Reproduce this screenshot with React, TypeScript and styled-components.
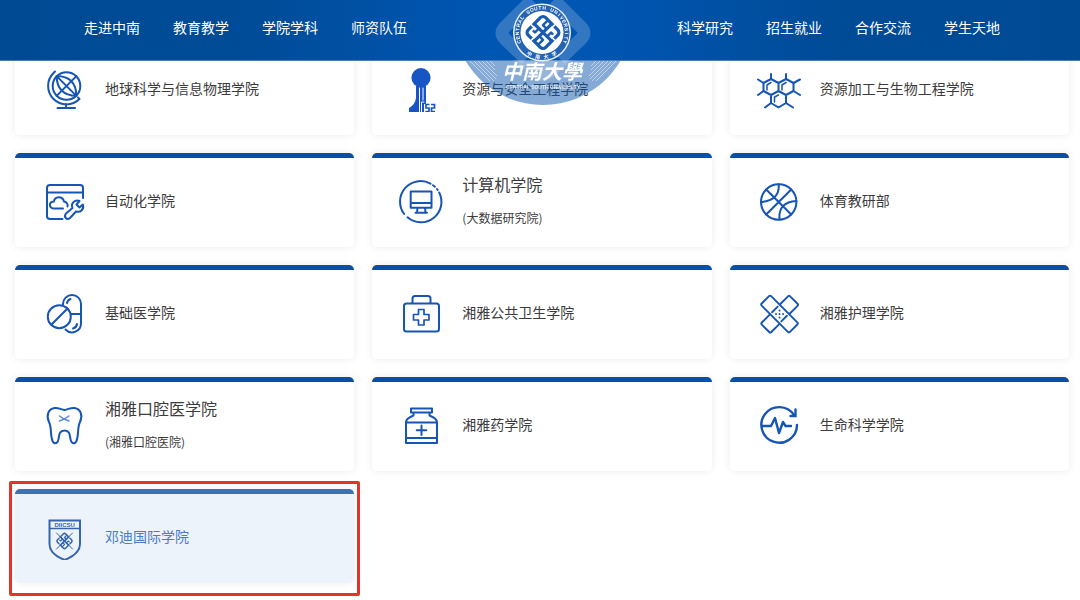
import React from "react";
import styled, { createGlobalStyle, css } from "styled-components";

const GlobalStyle = createGlobalStyle`
  *, *::before, *::after { box-sizing: border-box; }
  body {
    margin: 0;
    background: #fff;
    color: #3c3c3c;
    font-family: "Noto Sans CJK SC", sans-serif;
    overflow-x: hidden;
  }
  a { color: inherit; text-decoration: none; }
`;

const Header = styled.header`
  position: fixed;
  inset: 0 0 auto;
  z-index: 2;
  display: grid;
  grid-template-columns: 1fr 270px 1fr;
  align-items: center;
  height: 61px;
  padding-left: 4px;
  background: linear-gradient(90deg, #004a94, #004b96 22%, #0056b3 45%, #0056b3 55%, #004b96 78%, #004a94);
  border-bottom: 1px solid #4a7db8;
`;

const NavGroup = styled.nav<{ $side: "left" | "right" }>`
  display: flex;
  gap: 33px;
  justify-content: ${(p) => (p.$side === "left" ? "flex-end" : "flex-start")};
`;

const NavLink = styled.a`
  color: #fff;
  font-size: 14px;
  line-height: 20px;
  margin-bottom: 6px;
  white-space: nowrap;
`;

const EmblemLink = styled.a`
  align-self: start;
  justify-self: center;
  height: 60px;

  svg {
    display: block;
    overflow: visible;
  }
`;

const CollegeGrid = styled.main`
  display: grid;
  grid-template-columns: repeat(3, 1fr);
  gap: 18px;
  padding: 41px 11px 16px 15px;
`;

const Card = styled.a<{ $active?: boolean }>`
  position: relative;
  display: flex;
  align-items: center;
  gap: 17px;
  height: 94px;
  padding: 0 16px 5px 25px;
  background: #fff;
  border-top: 5px solid #0450a6;
  border-radius: 5px;
  box-shadow: 0 0 8px rgba(0, 0, 0, 0.08);

  ${(p) =>
    p.$active &&
    css`
      background: #edf3fa;
      border-top-color: #3673b9;
      color: #4a7bc6;

      &::after {
        content: "";
        position: absolute;
        inset: -13px -6px;
        border: 3px solid #e2342b;
        border-radius: 2px;
      }
    `}
`;

const CardIcon = styled.svg`
  flex: none;
  width: 48px;
  height: 48px;
  fill: none;
  stroke: #1755b5;
  stroke-width: 2;
  stroke-linecap: round;
  stroke-linejoin: round;
`;

const CardText = styled.span`
  display: flex;
  flex-direction: column;
  gap: 12px;
`;

const CardTitle = styled.span<{ $large?: boolean }>`
  font-size: ${(p) => (p.$large ? 16 : 14)}px;
  line-height: ${(p) => (p.$large ? 24 : 20)}px;
`;

const CardNote = styled.span`
  font-size: 12px;
  line-height: 20px;
`;

const Knot = ({ color, gap }: { color: string; gap: string }) => (
  <g transform="rotate(45)" fill="none" strokeLinejoin="round">
    <rect x="-13" y="-13" width="26" height="26" rx="4" stroke={color} strokeWidth="3.4" />
    <path stroke={color} strokeWidth="3.4" d="M0 -13V13M-13 0H13" />
    <path stroke={color} strokeWidth="2.6" d="M-5.500 -13V-5.500H0M5.500 13V5.500H0" />
    <path stroke={color} strokeWidth="2.6" d="M6 0V-6H9M-6 0V6H-9" />
    <path stroke={gap} strokeWidth="1.600" d="M3 -15V-11M-3 15V11M15 -3H11M-15 3H-11" />
  </g>
);

type RingTextProps = { text: string; radius: number; from: number; to: number; size: number; inward?: boolean };

const RingText = ({ text, radius, from, to, size, inward }: RingTextProps) => (
  <g fill="#fff" fontSize={size} fontWeight="700" textAnchor="middle">
    {text.split("").map((ch, i, all) => {
      const angle = from + ((to - from) * i) / (all.length - 1);
      return ch === " " ? null : (
        <text key={i} transform={`rotate(${angle} 542 32.5)`} x="542" y={32.5 + (inward ? radius : -radius)}>
          {ch}
        </text>
      );
    })}
  </g>
);

const Emblem = () => (
  <svg width="160" height="106" viewBox="462 0 160 106" aria-hidden="true">
    <defs>
      <clipPath id="lower">
        <rect x="450" y="61" width="190" height="50" />
      </clipPath>
      <clipPath id="disc">
        <circle cx="543" cy="15" r="90" />
      </clipPath>
    </defs>
    <g clipPath="url(#lower)">
      <circle cx="543" cy="15" r="90" fill="#0b55ac" fillOpacity="0.5" />
      <g clipPath="url(#disc)" stroke="#fff" strokeWidth="1" opacity="0.5">
        <path d="M463 54l27 27M467 54l27 27M471 54l25 25M475 54l22 22M479 54l16 16M483 54l12 12" />
        <path d="M623 54l-27 27M619 54l-27 27M615 54l-25 25M611 54l-22 22M607 54l-16 16M603 54l-12 12" />
      </g>
    </g>
    <g opacity="0.2" fill="none" stroke="#fff" strokeWidth="13" strokeLinejoin="round">
      <path d="M532 0L505 27Q499 33 505 39L526 59M554 0L581 27Q587 33 581 39L560 59" />
    </g>
    <path d="M513 60h60l-20 17q-10 8-20 0z" fill="#fff" opacity="0.15" />
    <circle cx="542" cy="32.500" r="29" fill="#e9f0f8" />
    <circle cx="542" cy="32.500" r="27.500" fill="#2464b3" />
    <circle cx="542" cy="32.500" r="21.500" fill="#fff" />
    <g fontFamily="Liberation Sans, sans-serif">
      <RingText text="CENTRAL SOUTH UNIVERSITY" radius={23} from={-112} to={112} size={5} />
    </g>
    <g fontFamily="Noto Sans CJK SC, sans-serif">
      <RingText text="中南大学" radius={26.5} from={30} to={-30} size={5} inward />
    </g>
    <g transform="translate(543 32.500) scale(0.950)">
      <Knot color="#1a5caf" gap="#fff" />
    </g>
    <g fill="#fff" textAnchor="middle">
      <text x="542" y="79" fontFamily="Noto Sans CJK TC, sans-serif" fontSize="20" fontStyle="italic" fontWeight="700">
        中南大學
      </text>
      <text x="543" y="89" fontFamily="Liberation Sans, sans-serif" fontSize="5" fontWeight="700" opacity="0.8">
        CENTRAL SOUTH UNIVERSITY
      </text>
    </g>
  </svg>
);

const icons: Record<string, React.ReactNode> = {
  globe: (
    <>
      <circle cx="26.500" cy="20" r="13.800" />
      <path d="M15 5.500L13.500 7A18.200 18.200 0 0 0 39.500 33L38 31.500M26 38V42M17.500 42H35" />
      <g transform="rotate(-45 26.500 20)">
        <path d="M26.500 6V34M12.500 20H40.500M26.500 6Q13 20 26.500 34M26.500 6Q40 20 26.500 34" />
      </g>
    </>
  ),
  tower: (
    <g fill="#1755c4" stroke="none">
      <circle cx="24" cy="11.700" r="9.600" />
      <path d="M19 20H29V38H27V46H12V42Q18 39 19 32Z" />
      <path d="M22.500 22V46M26 22V34M24.500 46V36H27" stroke="#fff" strokeWidth="1" fill="none" />
      <path
        d="M32.500 38.500H29V42H32V45.500H28.300M34 38.500H37.500V42H34.500V45.500H38"
        stroke="#1755c4"
        strokeWidth="1.700"
        fill="none"
        strokeLinecap="butt"
        strokeLinejoin="miter"
      />
    </g>
  ),
  molecule: (
    <>
      <path d="M16 13L23.500 17V25L16 29L8.500 25V17ZM31 13L38.500 17V25L31 29L23.500 25V17ZM16 29V37L23.500 41.500L31 37V29" />
      <path d="M16 13V8M31 13V8M8.500 17L3 13.500M8.500 25L3 29M38.500 17L45 13.500M38.500 25L45 29M16 37L10 41.500M31 37L38 41.500" />
      <path d="M12 24V19L16 16.500M27 24V19L31 16.500M19.500 36V31L23.500 29" strokeWidth="1.500" />
    </>
  ),
  automation: (
    <>
      <path d="M43 20V10Q43 7 40 7H10Q7 7 7 10V38Q7 41 10 41H22.500M7 14.500H43" />
      <path d="M23 30.500H14.500C8.500 30.500 8.500 23.500 14 23.500C14.500 18 22.500 17.500 24 23.500C27 24 28 26.500 27.500 28.500" />
      <path d="M42.800 26.500C44.500 31 40.500 35 36 33.500L30 40Q27.500 42 25.800 40Q24 38 26 35.500L32.500 30C30.500 25 35 21.500 39.500 23L36.500 26.500L39.500 29.500Z" />
    </>
  ),
  computer: (
    <>
      <path d="M33.500 5.700A20.500 20.500 0 0 0 7.200 36M10.500 39.300A20.500 20.500 0 0 0 42.200 14.500M36 7.200L38 8.700M40 11L40.600 12" />
      <path d="M13.700 13.500H34.500V29.700H13.700ZM13.700 25H34.500M20.500 30L20 34.500M28 30L28.500 34.500M18.500 34.700H30" />
    </>
  ),
  basketball: (
    <>
      <circle cx="23.700" cy="24" r="17.700" />
      <path d="M11.200 11.500L36.200 36.500M11.200 36.500L36.200 11.500M23.700 6.300Q25 22.500 6 24M41.500 23Q23 24 24.500 41.500" />
    </>
  ),
  pills: (
    <>
      <circle cx="19.300" cy="26.700" r="11.500" />
      <path d="M11.500 34.500L27.500 18.500M23 14.500V14A9 9 0 0 1 41 14V33A9 9 0 0 1 25.500 39.500M31 24H41" />
      <path d="M27 13Q27.500 10 30.500 9M37 34Q36.500 37.500 33 38.500" />
    </>
  ),
  medkit: (
    <>
      <rect x="7" y="13.500" width="35" height="28" rx="2.500" />
      <path d="M15.500 13V8.500Q15.500 6 18 6H31Q33.500 6 33.500 8.500V13" />
      <path d="M21.500 19.500H27V24.500H32V30H27V35H21.500V30H16.500V24.500H21.500Z" strokeWidth="1.700" />
    </>
  ),
  bandage: (
    <g transform="rotate(45 24.500 24)" strokeWidth="1.900">
      <path d="M18 17V5.500Q18 4 19.500 4H30Q31.500 4 31.500 5.500V17M18 31V42.500Q18 44 19.500 44H30Q31.500 44 31.500 42.500V31" />
      <path d="M6 17.300H43Q44.500 17.300 44.500 18.800V29.200Q44.500 30.700 43 30.700H6Q4.500 30.700 4.500 29.200V18.800Q4.500 17.300 6 17.300Z" />
      <path d="M18 20V28M31 20V28" />
      <path d="M22 21.500h.1M27 21.500h.1M24.500 24h.1M22 26.500h.1M27 26.500h.1" />
    </g>
  ),
  tooth: (
    <>
      <path d="M24.500 8C20 7 18 5.500 14.500 6C8 7 6 14 9 20C12 26 10 33 12.500 39Q14.500 43 17.500 40C20 36 17.500 28.500 24.500 28.500C31.500 28.500 29 36 31.500 40Q34.500 43 36.500 39C39 33 37 26 40 20C43 14 41 7 34.500 6C31 5.500 29 7 24.500 8Z" />
      <path d="M19.500 14Q24 17.500 29 19M29 14Q24 17.500 19.500 19" stroke="#5b8bd0" strokeWidth="1.500" />
    </>
  ),
  bottle: (
    <>
      <path d="M14 6.500H35V10.500H14ZM16.500 11V13.500Q9 16.500 9 20V41H40V20Q40 16.500 32.500 13.500V11M9 20.500H40M9 36H40" />
      <path d="M24.500 23.500V33M19.700 28.300H29.300" />
    </>
  ),
  pulse: (
    <>
      <path d="M42 23A17.800 17.800 0 1 1 39 13" strokeWidth="2.400" />
      <path d="M40.500 7.500V14H35.500" strokeWidth="2.400" strokeLinejoin="miter" />
      <path d="M7 24H16L20 16L24 31L28 20L30.500 24H36" strokeWidth="2.400" />
    </>
  ),
  shield: (
    <g stroke="#3565ad">
      <path d="M9.500 6.500H40V30C40 38 32 43 24.700 46C17 43 9.500 38 9.500 30Z" strokeLinejoin="miter" />
      <path d="M10 14.500H40" strokeWidth="1.500" />
      <text
        x="24.700"
        y="12.500"
        textAnchor="middle"
        fontFamily="Liberation Sans, sans-serif"
        fontSize="6"
        fontWeight="700"
        fill="#3565ad"
        stroke="none"
      >
        DIICSU
      </text>
      <path d="M16.500 19L32.500 35M32.500 19L16.500 35" strokeWidth="1" />
      <g transform="translate(24.500 27) scale(0.450)">
        <Knot color="#3565ad" gap="#edf3fa" />
      </g>
    </g>
  ),
};

type College = { name: string; icon: string; note?: string; active?: boolean };

const colleges: College[] = [
  { name: "地球科学与信息物理学院", icon: "globe" },
  { name: "资源与安全工程学院", icon: "tower" },
  { name: "资源加工与生物工程学院", icon: "molecule" },
  { name: "自动化学院", icon: "automation" },
  { name: "计算机学院", icon: "computer", note: "(大数据研究院)" },
  { name: "体育教研部", icon: "basketball" },
  { name: "基础医学院", icon: "pills" },
  { name: "湘雅公共卫生学院", icon: "medkit" },
  { name: "湘雅护理学院", icon: "bandage" },
  { name: "湘雅口腔医学院", icon: "tooth", note: "(湘雅口腔医院)" },
  { name: "湘雅药学院", icon: "bottle" },
  { name: "生命科学学院", icon: "pulse" },
  { name: "邓迪国际学院", icon: "shield", active: true },
];

const leftNav = ["走进中南", "教育教学", "学院学科", "师资队伍"];
const rightNav = ["科学研究", "招生就业", "合作交流", "学生天地"];

export default function App() {
  return (
    <>
      <GlobalStyle />
      <Header>
        <NavGroup $side="left">
          {leftNav.map((label) => (
            <NavLink key={label} href="#">
              {label}
            </NavLink>
          ))}
        </NavGroup>
        <EmblemLink href="#" aria-label="中南大学">
          <Emblem />
        </EmblemLink>
        <NavGroup $side="right">
          {rightNav.map((label) => (
            <NavLink key={label} href="#">
              {label}
            </NavLink>
          ))}
        </NavGroup>
      </Header>
      <CollegeGrid>
        {colleges.map((c) => (
          <Card key={c.name} href="#" $active={c.active}>
            <CardIcon viewBox="0 -2 48 48" aria-hidden="true">
              {icons[c.icon]}
            </CardIcon>
            <CardText>
              <CardTitle $large={!!c.note}>{c.name}</CardTitle>
              {c.note && <CardNote>{c.note}</CardNote>}
            </CardText>
          </Card>
        ))}
      </CollegeGrid>
    </>
  );
}
